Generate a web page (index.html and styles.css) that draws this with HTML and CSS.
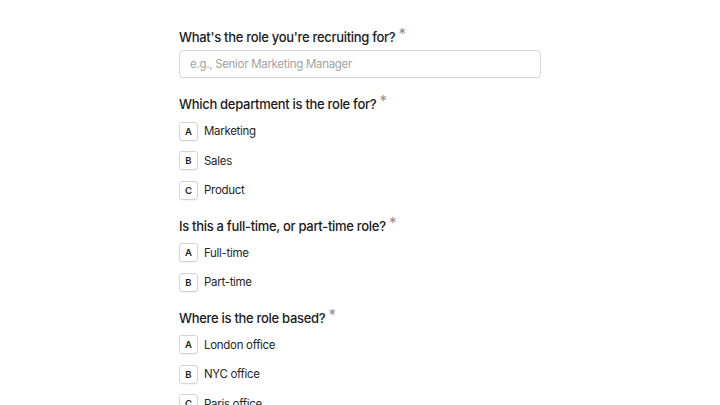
FILE: index.html
```html
<!DOCTYPE html>
<html>
<head>
<meta charset="utf-8">
<link rel="stylesheet" href="styles.css">
</head>
<body>
<main class="form">
  <section class="question">
    <h2 class="q-title">What's the role you're recruiting for? <span class="req">*</span></h2>
    <input class="text-input" type="text" placeholder="e.g., Senior Marketing Manager">
  </section>
  <section class="question">
    <h2 class="q-title">Which department is the role for? <span class="req">*</span></h2>
    <ul class="options">
      <li class="option"><span class="key">A</span><span class="label">Marketing</span></li>
      <li class="option"><span class="key">B</span><span class="label">Sales</span></li>
      <li class="option"><span class="key">C</span><span class="label">Product</span></li>
    </ul>
  </section>
  <section class="question">
    <h2 class="q-title">Is this a full-time, or part-time role? <span class="req">*</span></h2>
    <ul class="options">
      <li class="option"><span class="key">A</span><span class="label">Full-time</span></li>
      <li class="option"><span class="key">B</span><span class="label">Part-time</span></li>
    </ul>
  </section>
  <section class="question">
    <h2 class="q-title">Where is the role based? <span class="req">*</span></h2>
    <ul class="options">
      <li class="option"><span class="key">A</span><span class="label">London office</span></li>
      <li class="option"><span class="key">B</span><span class="label">NYC office</span></li>
      <li class="option"><span class="key">C</span><span class="label">Paris office</span></li>
    </ul>
  </section>
</main>
</body>
</html>
```

FILE: styles.css
```css
html, body {
  margin: 0;
  padding: 0;
  background: #ffffff;
}
body {
  font-family: Inter, "Noto Sans", sans-serif;
  color: #1c1c1c;
  height: 405px;
  overflow: hidden;
}
.form {
  width: 362px;
  margin: 0 auto;
  padding-top: 27px;
  display: flex;
  flex-direction: column;
  gap: 16px;
}
.question {
  display: flex;
  flex-direction: column;
}
.q-title {
  margin: 0;
  font-size: 13px;
  font-weight: 500;
  line-height: 20px;
  color: #1a1a1a;
  letter-spacing: -0.3px;
}
.req {
  color: #8f8f8f;
  font-size: 15px;
  position: relative;
  top: -3px;
  font-weight: 400;
}
.text-input {
  margin-top: 3px;
  height: 28px;
  box-sizing: border-box;
  border: 1px solid #d6d6d6;
  border-radius: 4px;
  padding: 0 10px;
  font-family: Inter, "Noto Sans", sans-serif;
  font-size: 11.5px;
  letter-spacing: -0.3px;
  color: #1c1c1c;
  box-shadow: 0 1px 1px rgba(0,0,0,0.04);
  outline: none;
}
.text-input::placeholder {
  color: #a3a3a3;
}
.options {
  list-style: none;
  margin: 7.5px 0 0;
  padding: 0;
  display: flex;
  flex-direction: column;
  gap: 10.5px;
}
.option {
  display: flex;
  align-items: center;
  gap: 6px;
  height: 19px;
}
.key {
  width: 19px;
  height: 19px;
  box-sizing: border-box;
  border: 1px solid #d4d4d4;
  border-radius: 3px;
  display: flex;
  align-items: center;
  justify-content: center;
  font-size: 9.5px;
  font-weight: 600;
  color: #1c1c1c;
  box-shadow: 0 1px 1px rgba(0,0,0,0.05);
}
.label {
  font-size: 11.5px;
  letter-spacing: -0.3px;
  color: #262626;
}
```
